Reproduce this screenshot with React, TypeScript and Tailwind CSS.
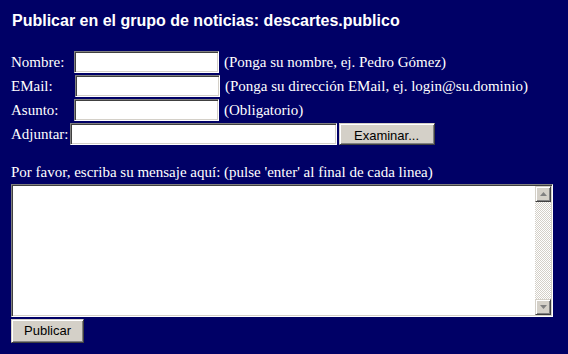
const serif = "font-['Liberation_Serif','Times_New_Roman',serif]";
const sans = "font-['Liberation_Sans',Arial,sans-serif]";

// classic win2k bevels
const inset =
  'border border-t-[#808080] border-l-[#808080] border-r-white border-b-white shadow-[inset_1px_1px_0_#404040,inset_-1px_-1px_0_#d4d0c8] bg-white';
const outset =
  'border border-t-[#d4d0c8] border-l-[#d4d0c8] border-r-[#404040] border-b-[#404040] shadow-[inset_1px_1px_0_#ffffff,inset_-1px_-1px_0_#808080] bg-[#d4d0c8]';

function Field({ label, hint, shift = '' }: { label: string; hint: string; shift?: string }) {
  return (
    <div className="flex h-6 items-center">
      <span className="w-[63px] shrink-0">{label}</span>
      <div className={`h-[22px] w-[145px] shrink-0 ${inset} ${shift}`} />
      <span className="ml-[5px] whitespace-nowrap">{hint}</span>
    </div>
  );
}

function Arrow({ up }: { up?: boolean }) {
  return (
    <div className={`flex h-4 w-4 items-center justify-center ${outset}`}>
      <svg width="7" height="4" viewBox="0 0 7 4">
        <path d={up ? 'M0 4 L3.5 0 L7 4 Z' : 'M0 0 L3.5 4 L7 0 Z'} fill="#808080" />
      </svg>
    </div>
  );
}

export default function App() {
  return (
    <div className={`h-[354px] w-[568px] overflow-hidden bg-[#000066] px-[11px] text-white ${serif} text-[15px]`}>
      <h1 className={`pt-[12px] text-[16px] font-bold leading-[18px] ${sans} pl-px`}>
        Publicar en el grupo de noticias: descartes.publico
      </h1>

      <div className="mt-[20px] leading-6">
        <Field label="Nombre:" hint="(Ponga su nombre, ej. Pedro Gómez)" />
        <Field label="EMail:" hint="(Ponga su dirección EMail, ej. login@su.dominio)" shift="ml-px" />
        <Field label="Asunto:" hint="(Obligatorio)" />
        <div className="flex h-6 items-center">
          <span>Adjuntar:</span>
          <div className={`ml-px h-[22px] w-[267px] ${inset}`} />
          <button className={`ml-[2px] h-[22px] w-[96px] text-[13px] text-black ${sans} ${outset}`}>
            Examinar...
          </button>
        </div>
      </div>

      <p className="mt-[17px] leading-[18px] whitespace-nowrap">
        Por favor, escriba su mensaje aquí: (pulse 'enter' al final de cada linea)
      </p>

      <div className={`mt-[3px] flex h-[133px] w-[542px] justify-end p-px ${inset}`}>
        <div className="flex h-full w-4 flex-col justify-between bg-[repeating-conic-gradient(#d4d0c8_0_25%,#ffffff_0_50%)] bg-[length:2px_2px]">
          <Arrow up />
          <Arrow />
        </div>
      </div>

      <button className={`mt-[2px] h-6 w-[73px] text-[13px] text-black ${sans} ${outset}`}>Publicar</button>
    </div>
  );
}
